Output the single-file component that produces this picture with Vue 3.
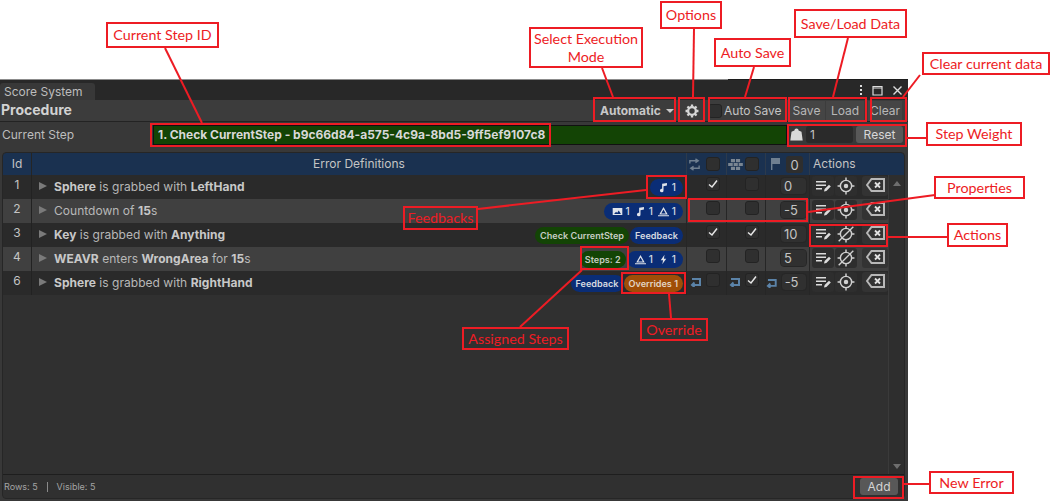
<script setup>
const ICONS = {
  note: 'M6 2.500 13 1.500v3.600L8 6v6.200A2.600 2.600 0 1 1 6 9.800z',
  image: 'M1 3h14v10H1zM3 11.500h10L9.800 6.500 7.400 10 6 8.400z',
  bolt: 'M9.500 1 4 9h3.400L6.200 15 12 6.800H8.600z',
  wave: 'M8 1.500 14.200 12.500H1.800zM8 5.200 4.700 11h6.600zM0 13.400h16v1.600H0z',
}

const rows = [
  {
    id: 1,
    parts: [['Sphere', true], [' is grabbed with ', false], ['LeftHand', true]],
    badges: [{ color: 'blue', items: [{ icon: 'note', text: '1' }] }],
    a: true,
    b: false,
    weight: '0',
    target: true,
  },
  {
    id: 2,
    parts: [['Countdown of ', false], ['15', true], ['s', false]],
    badges: [
      {
        color: 'blue',
        items: [
          { icon: 'image', text: '1' },
          { icon: 'note', text: '1' },
          { icon: 'wave', text: '1' },
        ],
      },
    ],
    a: false,
    b: false,
    weight: '-5',
    target: true,
  },
  {
    id: 3,
    parts: [['Key', true], [' is grabbed with ', false], ['Anything', true]],
    badges: [
      { color: 'green', label: 'Check CurrentStep' },
      { color: 'blue', label: 'Feedback' },
    ],
    a: true,
    b: true,
    weight: '10',
    target: false,
  },
  {
    id: 4,
    parts: [['WEAVR', true], [' enters ', false], ['WrongArea', true], [' for ', false], ['15', true], ['s', false]],
    badges: [
      { color: 'green', label: 'Steps: 2' },
      {
        color: 'blue',
        items: [
          { icon: 'wave', text: '1' },
          { icon: 'bolt', text: '1' },
        ],
      },
    ],
    a: false,
    b: false,
    weight: '5',
    target: false,
  },
  {
    id: 6,
    parts: [['Sphere', true], [' is grabbed with ', false], ['RightHand', true]],
    badges: [
      { color: 'blue', label: 'Feedback', tuck: true },
      { color: 'orange', label: 'Overrides 1' },
    ],
    a: false,
    b: true,
    weight: '-5',
    target: true,
    overridden: true,
  },
]

const frames = [
  [150, 123, 401, 24],
  [593, 97, 83, 25],
  [678, 97, 27, 25],
  [708, 97, 79, 25],
  [788, 97, 79, 25],
  [870, 97, 37, 25],
  [787, 124, 120, 23],
  [646, 175, 41, 24],
  [688, 198, 120, 24],
  [809, 224, 79, 23],
  [580, 246, 49, 24],
  [621, 272, 65, 22],
  [853, 476, 51, 23],
]

const labels = [
  { text: 'Current Step ID', x: 106, y: 22, w: 113, h: 26 },
  { text: 'Select Execution Mode', x: 529, y: 27, w: 114, h: 41, wrap: true },
  { text: 'Options', x: 660, y: 1, w: 62, h: 28 },
  { text: 'Auto Save', x: 714, y: 38, w: 77, h: 29 },
  { text: 'Save/Load Data', x: 794, y: 9, w: 113, h: 29 },
  { text: 'Clear current data', x: 922, y: 52, w: 128, h: 23 },
  { text: 'Step Weight', x: 926, y: 122, w: 96, h: 24 },
  { text: 'Feedbacks', x: 403, y: 206, w: 75, h: 24 },
  { text: 'Properties', x: 934, y: 176, w: 91, h: 23 },
  { text: 'Actions', x: 947, y: 223, w: 61, h: 24 },
  { text: 'Assigned Steps', x: 462, y: 327, w: 107, h: 23 },
  { text: 'Override', x: 640, y: 318, w: 68, h: 23 },
  { text: 'New Error', x: 929, y: 471, w: 85, h: 23 },
]

const leaders = [
  [165, 48, 202, 123],
  [602, 68, 613, 97],
  [694, 29, 693, 97],
  [754, 67, 745, 97],
  [848, 38, 833, 97],
  [920, 75, 903, 97],
  [907, 138, 926, 138],
  [478, 209, 646, 190],
  [808, 212, 935, 195],
  [888, 237, 947, 237],
  [520, 327, 582, 270],
  [669, 294, 671, 318],
  [904, 484, 929, 484],
]

function box(item) {
  const [x, y, w, h] = Array.isArray(item) ? item : [item.x, item.y, item.w, item.h]
  return { left: `${x}px`, top: `${y}px`, width: `${w}px`, height: `${h}px` }
}
</script>

<template>
  <div class="page">
    <div class="window">
      <div class="top-edge"><span></span></div>
      <div class="tabs">
        <div class="tab">Score System</div>
        <div class="win-icons">
          <svg width="4" height="12" viewBox="0 0 4 12"><path d="M1 1h2v2H1zM1 5h2v2H1zM1 9h2v2H1z" fill="#ddd" /></svg>
          <svg width="11" height="11" viewBox="0 0 11 11"><path d="M1 1.500h9v8.500H1zM1 3h9" fill="none" stroke="#ddd" stroke-width="1.200" /></svg>
          <svg width="11" height="11" viewBox="0 0 11 11"><path d="M1.500 1.500l8 8M9.500 1.500l-8 8" stroke="#ddd" stroke-width="1.400" /></svg>
        </div>
      </div>

      <div class="toolbar">
        <div class="title">Procedure</div>
        <div class="mode">Automatic <i class="caret"></i></div>
        <div class="gear">
          <svg width="14" height="14" viewBox="0 0 16 16">
            <circle cx="8" cy="8" r="4.400" fill="none" stroke="#d6d6d6" stroke-width="2.600" />
            <path d="M8 .6v14.800M.6 8h14.800M2.800 2.800l10.400 10.400M13.200 2.800 2.800 13.200" stroke="#d6d6d6" stroke-width="2.600" stroke-dasharray="2.600 9.600" />
          </svg>
        </div>
        <div class="auto"><span class="check"></span>Auto Save</div>
        <div class="tool-btn save">Save</div>
        <div class="tool-btn load">Load</div>
        <div class="tool-btn clear">Clear</div>
      </div>

      <div class="step-row">
        <div class="step-label">Current Step</div>
        <div class="step-bar">1. Check CurrentStep - b9c66d84-a575-4c9a-8bd5-9ff5ef9107c8</div>
        <svg class="weight-icon" width="13" height="14" viewBox="0 0 13 14">
          <path d="M4.400 3.600a2.100 2.100 0 1 1 4.200 0l2.900 1.200 1.200 8.700H.3l1.200-8.700z" fill="#d9d9d9" />
        </svg>
        <div class="step-field">1</div>
        <div class="reset">Reset</div>
      </div>

      <div class="table">
        <div class="head">
          <div class="h-id">Id</div>
          <div class="h-def">Error Definitions</div>
          <div class="h-cell">
            <svg width="13" height="13" viewBox="0 0 14 14">
              <path d="M2 6V3h8M8 1l3 2-3 2M12 8v3H4M6 9l-3 2 3 2" fill="none" stroke="#6f7f90" stroke-width="1.500" />
            </svg>
            <span class="check"></span>
          </div>
          <div class="h-cell">
            <svg width="15" height="11" viewBox="0 0 16 12">
              <path d="M3 0h4.500v3.500H3zM8.500 0H13v3.500H8.500zM0 4.300h5v3.400H0zM6 4.300h4.500v3.400H6zM11.500 4.300H16v3.400h-4.500zM3 8.500h4.500V12H3zM8.500 8.500H13V12H8.500z" fill="#7a8591" />
            </svg>
            <span class="check"></span>
          </div>
          <div class="h-cell h-flag">
            <svg width="9" height="12" viewBox="0 0 9 12"><path d="M0 0h9v6H1.400v6H0z" fill="#6f7f90" /></svg>
            <span class="num">0</span>
          </div>
          <div class="h-actions">Actions</div>
        </div>

        <div class="body">
          <div class="rows">
            <div v-for="row in rows" :key="row.id" class="row">
              <div class="c-id">{{ row.id }}</div>
              <div class="c-def">
                <i class="expand"></i>
                <span class="sentence">
                  <template v-for="(part, i) in row.parts" :key="i">
                    <b v-if="part[1]">{{ part[0] }}</b>
                    <template v-else>{{ part[0] }}</template>
                  </template>
                </span>
                <div class="badges">
                  <div
                    v-for="(badge, i) in row.badges"
                    :key="i"
                    class="badge"
                    :class="[`badge--${badge.color}`, { 'badge--tuck': badge.tuck, 'badge--icons': badge.items }]"
                  >
                    <template v-if="badge.label">{{ badge.label }}</template>
                    <template v-else>
                      <span v-for="(item, j) in badge.items" :key="j" class="badge-item">
                        <svg width="11" height="11" viewBox="0 0 16 16">
                          <path :d="ICONS[item.icon]" fill="#dfe3ea" fill-rule="evenodd" />
                        </svg>
                        {{ item.text }}
                      </span>
                    </template>
                  </div>
                </div>
              </div>
              <div class="c-prop">
                <svg v-if="row.overridden" class="over" width="13" height="11" viewBox="0 0 13 11">
                  <path d="M2 3h8v6H2M4.500 6.500 2 9l2.500 2" fill="none" stroke="#5b83a8" stroke-width="2" />
                </svg>
                <span class="check">
                  <svg v-if="row.a" width="10" height="10" viewBox="0 0 10 10"><path d="M1 5.500 4 8l5-6.500" fill="none" stroke="#e6e6e6" stroke-width="1.500" /></svg>
                </span>
              </div>
              <div class="c-prop">
                <svg v-if="row.overridden" class="over" width="13" height="11" viewBox="0 0 13 11">
                  <path d="M2 3h8v6H2M4.500 6.500 2 9l2.500 2" fill="none" stroke="#5b83a8" stroke-width="2" />
                </svg>
                <span class="check">
                  <svg v-if="row.b" width="10" height="10" viewBox="0 0 10 10"><path d="M1 5.500 4 8l5-6.500" fill="none" stroke="#e6e6e6" stroke-width="1.500" /></svg>
                </span>
              </div>
              <div class="c-prop c-weight">
                <svg v-if="row.overridden" class="over" width="13" height="11" viewBox="0 0 13 11">
                  <path d="M2 3h8v6H2M4.500 6.500 2 9l2.500 2" fill="none" stroke="#5b83a8" stroke-width="2" />
                </svg>
                <span class="num wide">{{ row.weight }}</span>
              </div>
              <div class="c-actions">
                <span class="act">
                  <svg width="16" height="14" viewBox="0 0 16 14">
                    <path d="M1 2h10v1.500H1zM1 5.500h10V7H1zM1 9h6v1.500H1z" fill="#dcdcdc" />
                    <path d="M9 12.500l.6-2.400 4.400-4.400 1.800 1.800-4.400 4.400z" fill="#dcdcdc" />
                  </svg>
                </span>
                <span class="act">
                  <svg width="18" height="18" viewBox="0 0 16 16">
                    <circle cx="8" cy="8" r="5" fill="none" stroke="#d0d0d0" stroke-width="1.300" />
                    <circle v-if="row.target" cx="8" cy="8" r="2" fill="#d0d0d0" />
                    <path d="M8 .5v3M8 12.500v3M.5 8h3M12.500 8h3" stroke="#d0d0d0" stroke-width="1.300" />
                    <path v-if="!row.target" d="M1.500 14.500l13-13" stroke="#d0d0d0" stroke-width="1.200" />
                  </svg>
                </span>
                <span class="act act-x">
                  <svg width="19" height="14" viewBox="0 0 19 14">
                    <path d="M5.500 1H18v12H5.500L1 7z" fill="none" stroke="#b8b8b8" stroke-width="2" />
                    <path d="M9 4.500l5 5M14 4.500l-5 5" stroke="#e2e2e2" stroke-width="1.800" />
                  </svg>
                </span>
              </div>
            </div>
          </div>
          <div class="scroll">
            <i class="arrow-up"></i>
            <i class="arrow-down"></i>
          </div>
        </div>

        <div class="foot">
          <div class="counts"><span>Rows: 5</span><i></i><span>Visible: 5</span></div>
          <div class="add">Add</div>
        </div>
      </div>
    </div>

    <!-- callouts drawn on top of the screenshot -->
    <svg class="leaders" width="1052" height="501" viewBox="0 0 1052 501">
      <line
        v-for="(l, i) in leaders"
        :key="i"
        :x1="l[0]"
        :y1="l[1]"
        :x2="l[2]"
        :y2="l[3]"
        stroke="#ed1c24"
        stroke-width="2"
      />
    </svg>
    <div v-for="(f, i) in frames" :key="i" class="frame" :style="box(f)"></div>
    <div v-for="l in labels" :key="l.text" class="label" :class="{ 'label--wrap': l.wrap }" :style="box(l)">{{ l.text }}</div>
  </div>
</template>

<style>
html,
body {
  margin: 0;
  background: #fff;
}
</style>

<style scoped>
.page {
  position: relative;
  width: 1052px;
  height: 501px;
  padding-top: 79px;
  box-sizing: border-box;
  overflow: hidden;
  background: #fff;
  font-family: Inter, "Liberation Sans", sans-serif;
  font-size: 12px;
  color: #c4c4c4;
}

.window {
  width: 908px;
  height: 422px;
  display: flex;
  flex-direction: column;
  background: #383838;
}

.top-edge {
  height: 1px;
  background: #8c8c8c;
  display: flex;
  justify-content: flex-end;
}

.top-edge span {
  width: 180px;
  background: #1c1c1c;
}

.tabs {
  height: 20px;
  display: flex;
  justify-content: space-between;
  background: #282828;
}

.tab {
  width: 95px;
  margin-top: 3px;
  padding-left: 4px;
  box-sizing: border-box;
  background: #383838;
  border-radius: 3px 3px 0 0;
  line-height: 17px;
  color: #bdbdbd;
}

.win-icons {
  display: flex;
  align-items: center;
  gap: 9px;
  padding-right: 5px;
}

.toolbar {
  height: 21px;
  display: flex;
  align-items: center;
  background: #3c3c3c;
  border-bottom: 1px solid #232323;
}

.title {
  margin-left: 1px;
  width: 599px;
  font-size: 14px;
  font-weight: 700;
  line-height: 19px;
  margin-bottom: 2px;
  color: #d2d2d2;
}

.mode {
  width: 80px;
  font-weight: 700;
  color: #c8c8c8;
  display: flex;
  align-items: center;
  gap: 5px;
}

.caret {
  border: 4px solid transparent;
  border-top: 4px solid #c8c8c8;
  border-bottom: 0;
}

.gear {
  width: 28px;
  display: flex;
  padding-left: 5px;
  box-sizing: border-box;
}

.auto {
  width: 80px;
  display: flex;
  align-items: center;
  gap: 2px;
  color: #c4c4c4;
}

.tool-btn {
  height: 20px;
  line-height: 19px;
  text-align: center;
  background: #454545;
  color: #b8b8b8;
}

.save {
  width: 37px;
  margin-left: 0;
}

.load {
  width: 38px;
  margin-left: 1px;
}

.clear {
  width: 34px;
  margin-left: 4px;
}

.step-row {
  height: 24px;
  margin-bottom: 7px;
  display: flex;
  align-items: center;
}

.step-label {
  width: 153px;
  padding-left: 2px;
  box-sizing: border-box;
  color: #bdbdbd;
}

.step-bar {
  width: 634px;
  height: 20px;
  margin-top: 2px;
  box-sizing: border-box;
  border: 1px solid #111;
  padding-left: 4px;
  line-height: 17px;
  background: #134405;
  font-weight: 700;
  color: #d8d8d8;
}

.weight-icon {
  margin-left: 3px;
}

.step-field {
  width: 47px;
  height: 17px;
  margin-left: 3px;
  padding-left: 4px;
  box-sizing: border-box;
  line-height: 17px;
  background: #2a2a2a;
  border-radius: 3px;
}

.reset {
  width: 47px;
  height: 17px;
  margin-left: 3px;
  line-height: 17px;
  text-align: center;
  background: #585858;
  border-radius: 3px;
  color: #d8d8d8;
}

.table {
  flex: 1;
  margin: 0 4px 3px 3px;
  display: flex;
  flex-direction: column;
  min-height: 0;
  background: #303030;
  border-radius: 3px;
  outline: 1px solid #262626;
}

.head {
  height: 22px;
  display: grid;
  grid-template-columns: 29px 654px 40px 39px 44px 1fr;
  align-items: stretch;
  background: #1a3150;
  border-radius: 3px 3px 0 0;
}

.h-id {
  line-height: 22px;
  text-align: center;
  border-right: 1px solid #252525;
}

.h-def {
  line-height: 22px;
  text-align: center;
}

.h-cell {
  display: flex;
  align-items: center;
  justify-content: space-between;
  padding: 0 6px 0 1px;
  border-left: 1px solid #2c3a4c;
}

.h-flag {
  padding-right: 6px;
  padding-left: 5px;
}

.h-actions {
  padding-left: 3px;
  line-height: 21px;
  border-left: 1px solid #2c3a4c;
}

.check {
  width: 14px;
  height: 14px;
  flex: none;
  display: flex;
  align-items: center;
  justify-content: center;
  box-sizing: border-box;
  background: #2f2f2f;
  border: 1px solid #232323;
  border-radius: 3px;
}

.num {
  width: 17px;
  height: 17px;
  line-height: 18px;
  font-size: 13px;
  text-align: center;
  background: #2e2e2e;
  border-radius: 3px;
}

.num.wide {
  width: 25px;
  height: 16px;
  text-align: left;
  padding-left: 3px;
  box-sizing: border-box;
  line-height: 16px;
  background: #303030;
  outline: 1px solid #262626;
}

.body {
  display: flex;
  flex: 1;
  min-height: 0;
}

.rows {
  width: 885px;
  flex: none;
}

.row {
  height: 24px;
  display: grid;
  grid-template-columns: 29px 654px 40px 39px 44px 79px;
}

.row:nth-child(odd) {
  background: #2a2a2a;
}

.row:nth-child(even) {
  background: #404040;
}

.c-id {
  line-height: 19px;
  text-align: center;
  border-right: 1px solid #222;
}

.c-def {
  display: flex;
  align-items: center;
  padding: 0 3px 0 7px;
  min-width: 0;
}

.expand {
  flex: none;
  border-left: 8px solid #7a7a7a;
  border-top: 4.500px solid transparent;
  border-bottom: 4.500px solid transparent;
  margin: 0 7px 3px 0;
}

.sentence {
  white-space: pre;
  color: #b8b8b8;
  margin-bottom: 1px;
  letter-spacing: 0.03px;
}

.sentence b {
  font-weight: 700;
  color: #c8c8c8;
}

.badges {
  margin-left: auto;
  display: flex;
  gap: 1px;
}

.badge {
  height: 17px;
  padding: 0 5px;
  display: flex;
  align-items: center;
  gap: 5px;
  border-radius: 9px;
  font-size: 9.100px;
  font-weight: 600;
  white-space: nowrap;
  color: #d6dae0;
}

.badge--icons {
  padding: 0 7px 0 8px;
}

.badge--blue {
  background: #0a2d76;
}

.badge--green {
  background: #134405;
  color: #c6ccc2;
}

.badge--orange {
  background: #a04e07;
  color: #e2d4c4;
}

.badge--tuck {
  margin-right: -1px;
}

.badge-item {
  display: flex;
  align-items: center;
  gap: 3px;
  font-size: 10px;
  font-weight: 500;
}

.c-prop {
  display: flex;
  align-items: flex-start;
  justify-content: flex-end;
  gap: 3px;
  padding: 2px 6px 0 0;
  border-left: 1px solid #262626;
}

.c-weight {
  padding: 3px 3px 0 0;
}

.over {
  margin-top: 3px;
}

.c-actions {
  display: flex;
  align-items: flex-start;
  gap: 1px;
  padding: 1px 0 0 2px;
  border-left: 1px solid #262626;
}

.act {
  width: 22px;
  height: 20px;
  display: flex;
  align-items: center;
  justify-content: center;
  background: #2e2e2e;
  border-radius: 3px;
}

.act-x {
  width: 26px;
  margin-left: 4px;
  padding-bottom: 3px;
  box-sizing: border-box;
  background: #333;
}

.scroll {
  flex: 1;
  padding: 6px 0 5px;
  display: flex;
  flex-direction: column;
  align-items: center;
  justify-content: space-between;
  background: #2e2e2e;
  border-left: 1px solid #3a3a3a;
}

.arrow-up {
  border: 4px solid transparent;
  border-top: 0;
  border-bottom: 5px solid #6e6e6e;
}

.arrow-down {
  border: 4px solid transparent;
  border-bottom: 0;
  border-top: 5px solid #6e6e6e;
}

.foot {
  height: 23px;
  display: flex;
  align-items: center;
  justify-content: space-between;
  padding: 0 6px 0 1px;
  border-top: 1px solid #1e1e1e;
}

.counts {
  display: flex;
  align-items: center;
  gap: 9px;
  font-size: 9px;
  color: #a4a4a4;
}

.counts i {
  width: 1px;
  height: 10px;
  background: #8a8a8a;
}

.add {
  width: 38px;
  height: 17px;
  line-height: 17px;
  text-align: center;
  background: #585858;
  border-radius: 3px;
  color: #d4d4d4;
}

.leaders {
  position: absolute;
  left: 0;
  top: 0;
  pointer-events: none;
}

.frame {
  position: absolute;
  box-sizing: border-box;
  border: 2px solid #ed1c24;
}

.label {
  position: absolute;
  display: flex;
  align-items: center;
  justify-content: center;
  box-sizing: border-box;
  border: 2px solid #ed1c24;
  font-family: Lato, "Liberation Sans", sans-serif;
  font-size: 14.300px;
  line-height: 18px;
  white-space: nowrap;
  text-align: center;
  color: #ed1c24;
}

.label--wrap {
  white-space: normal;
}
</style>
